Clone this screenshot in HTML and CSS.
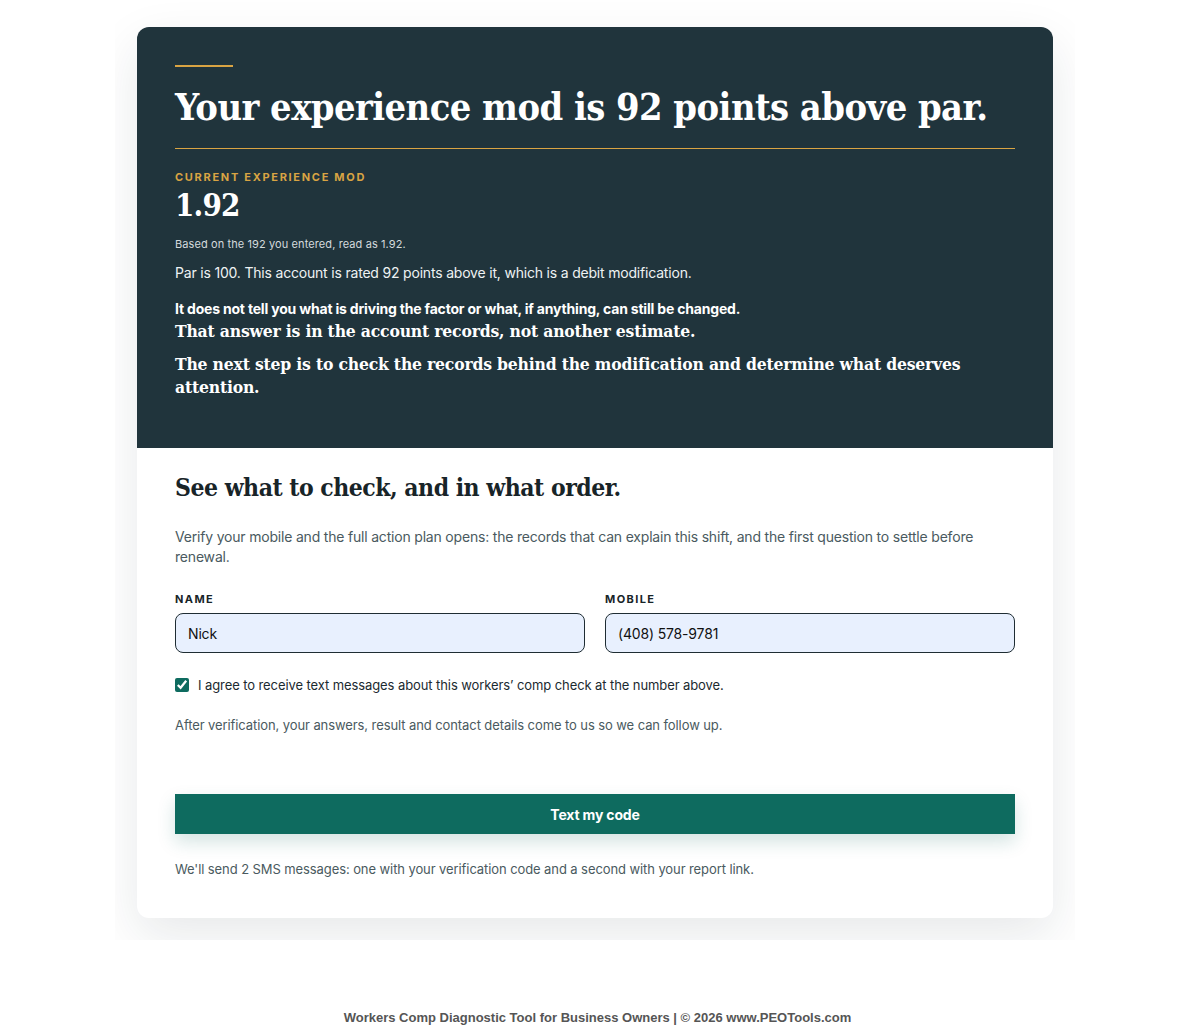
FILE: index.html
```html
<!DOCTYPE html>
<html lang="en">
<head>
<meta charset="utf-8">
<title>Workers Comp Diagnostic</title>
<link rel="stylesheet" href="styles.css">
</head>
<body>
<div class="wrap">
  <div class="card">
    <section class="result">
      <div class="rule-short"></div>
      <h1 class="headline">Your experience mod is 92 points above par.</h1>
      <div class="rule-long"></div>
      <div class="eyebrow">CURRENT EXPERIENCE MOD</div>
      <div class="mod">1.92</div>
      <p class="note">Based on the 192 you entered, read as 1.92.</p>
      <p class="par">Par is 100. This account is rated 92 points above it, which is a debit modification.</p>
      <p class="strong">It does not tell you what is driving the factor or what, if anything, can still be changed.</p>
      <p class="serif first">That answer is in the account records, not another estimate.</p>
      <p class="serif">The next step is to check the records behind the modification and determine what deserves attention.</p>
    </section>
    <section class="form">
      <h2 class="form-title">See what to check, and in what order.</h2>
      <p class="lead">Verify your mobile and the full action plan opens: the records that can explain this shift, and the first question to settle before renewal.</p>
      <div class="fields">
        <label class="field">
          <span class="label">NAME</span>
          <input class="input" type="text" value="Nick">
        </label>
        <label class="field">
          <span class="label">MOBILE</span>
          <input class="input" type="tel" value="(408) 578-9781">
        </label>
      </div>
      <label class="consent">
        <input type="checkbox" class="check" checked>
        <span>I agree to receive text messages about this workers’ comp check at the number above.</span>
      </label>
      <p class="small">After verification, your answers, result and contact details come to us so we can follow up.</p>
      <button class="btn" type="button">Text my code</button>
      <p class="small sms">We'll send 2 SMS messages: one with your verification code and a second with your report link.</p>
    </section>
  </div>
</div>
<footer class="footer">Workers Comp Diagnostic Tool for Business Owners | © 2026 www.PEOTools.com</footer>
</body>
</html>
```
FILE: styles.css
```css
* { box-sizing: border-box; }
html, body { margin: 0; padding: 0; background: #ffffff; }
body { font-family: Inter, "Liberation Sans", sans-serif; color: #1b2a30; letter-spacing: -0.012em; }

.wrap {
  width: 960px;
  margin: 0 0 0 115px;
  padding: 27px 22px 22px;
  overflow: hidden;
}
.card {
  border-radius: 12px;
  overflow: hidden;
  background: #ffffff;
  box-shadow: 0 18px 50px rgba(20, 40, 50, 0.10);
}

.result {
  background: #20343c;
  padding: 38px 38px 38px;
  color: #ffffff;
  min-height: 421px;
}
.rule-short { width: 58px; height: 2px; background: #d9a443; }
.headline {
  font-family: "DejaVu Serif Condensed", "DejaVu Serif", serif;
  font-stretch: condensed;
  font-weight: 700;
  font-size: 37.7px;
  letter-spacing: -0.55px;
  line-height: 48px;
  margin: 16px 0 17px;
}
.rule-long { height: 1px; background: #d9a443; }
.eyebrow {
  margin-top: 21px;
  font-size: 11px;
  font-weight: 700;
  letter-spacing: 1.7px;
  color: #d9a443;
  line-height: 14px;
}
.mod {
  font-family: "DejaVu Serif Condensed", "DejaVu Serif", serif;
  font-stretch: condensed;
  font-weight: 700;
  font-size: 31px;
  letter-spacing: -0.8px;
  line-height: 40px;
  margin-top: 1px;
}
.note { margin: 12px 0 0; font-size: 11px; line-height: 14px; color: #d4dadc; letter-spacing: 0.1px; }
.par { margin: 12px 0 0; font-size: 14px; line-height: 20px; color: #eef2f3; }
.strong { margin: 17px 0 0; font-size: 14px; line-height: 18px; font-weight: 700; color: #ffffff; }
.serif {
  font-family: "DejaVu Serif Condensed", "DejaVu Serif", serif;
  font-stretch: condensed;
  font-weight: 700;
  font-size: 17.4px;
  line-height: 23px;
  margin: 10px 0 0;
  letter-spacing: -0.2px;
}
.serif.first { margin-top: 2px; }

.form { padding: 24px 38px 40px; }
.form-title {
  font-family: "DejaVu Serif Condensed", "DejaVu Serif", serif;
  font-stretch: condensed;
  font-weight: 700;
  font-size: 24.5px;
  letter-spacing: -0.5px;
  line-height: 32px;
  margin: 0;
  color: #182428;
}
.lead { margin: 23px 0 0; font-size: 14px; line-height: 20px; color: #4a5a60; }
.fields {
  margin-top: 25px;
  display: grid;
  grid-template-columns: 1fr 1fr;
  gap: 20px;
}
.field { display: flex; flex-direction: column; }
.label { font-size: 11px; font-weight: 700; letter-spacing: 1.4px; color: #182428; line-height: 14px; margin-bottom: 7px; }
.input {
  height: 40px;
  border: 1px solid #1f2d33;
  border-radius: 8px;
  background: #e8f0fe;
  padding: 0 12px;
  font-family: Inter, "Liberation Sans", sans-serif;
  font-size: 14px;
  letter-spacing: -0.012em;
  color: #111;
}
.consent {
  margin-top: 24px;
  display: flex;
  align-items: center;
  gap: 9px;
  font-size: 13px;
  letter-spacing: -0.09px;
  color: #1b2a30;
}
.check { width: 14px; height: 14px; margin: 0; accent-color: #0e6b5f; }
.small { font-size: 13px; line-height: 18px; color: #4a5a60; margin: 23px 0 0; letter-spacing: -0.09px; }
.btn {
  display: block;
  width: 100%;
  height: 40px;
  margin-top: 60px;
  border: 0;
  background: #0e6b5f;
  color: #ffffff;
  font-family: Inter, "Liberation Sans", sans-serif;
  font-weight: 700;
  font-size: 14px;
  letter-spacing: -0.012em;
  box-shadow: 0 8px 18px rgba(14, 107, 95, 0.18);
}
.sms { margin-top: 26px; }

.footer {
  text-align: center;
  font-family: "Liberation Sans", Arial, sans-serif;
  font-weight: 700;
  font-size: 13px;
  letter-spacing: 0;
  color: #555;
  margin-top: 70px;
}
```
